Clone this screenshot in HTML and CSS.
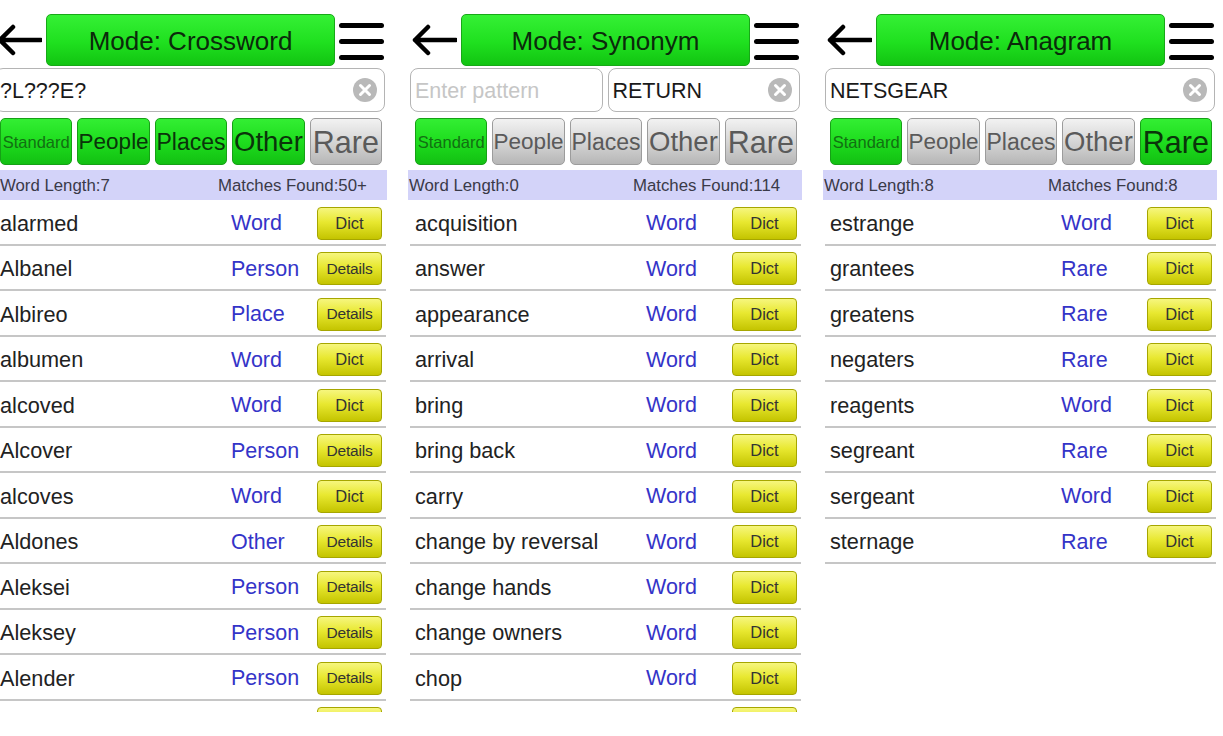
FILE: index.html
```html
<!DOCTYPE html>
<html>
<head>
<meta charset="utf-8">
<link rel="stylesheet" href="styles.css">
</head>
<body>
<div class="panels">

  <!-- Panel 1: Crossword -->
  <div class="panel first">
    <div class="header">
      <svg class="back" width="45" height="52" viewBox="0 0 45 52"><path d="M3 26 H44 M16 13 L3 26 L16 39" fill="none" stroke="#000" stroke-width="4.5" stroke-linecap="round" stroke-linejoin="round"/></svg>
      <div class="mode">Mode: Crossword</div>
      <div class="menu"><span></span><span></span><span></span></div>
    </div>
    <div class="search">
      <div class="field"><span class="val">?L???E?</span><span class="clear"><svg width="24" height="24" viewBox="0 0 24 24"><circle cx="12" cy="12" r="12" fill="#b9b9b9"/><path d="M7.5 7.5 L16.5 16.5 M16.5 7.5 L7.5 16.5" stroke="#fff" stroke-width="3" stroke-linecap="round"/></svg></span></div>
    </div>
    <div class="filters">
      <div class="fbtn on f-std">Standard</div>
      <div class="fbtn on f-ppl">People</div>
      <div class="fbtn on f-plc">Places</div>
      <div class="fbtn on f-oth">Other</div>
      <div class="fbtn f-rare">Rare</div>
    </div>
    <div class="info"><span class="len">Word Length:7</span><span class="found">Matches Found:50+</span></div>
    <div class="list">
      <div class="row"><span class="word">alarmed</span><span class="type">Word</span><span class="btn">Dict</span></div>
      <div class="row"><span class="word">Albanel</span><span class="type">Person</span><span class="btn det">Details</span></div>
      <div class="row"><span class="word">Albireo</span><span class="type">Place</span><span class="btn det">Details</span></div>
      <div class="row"><span class="word">albumen</span><span class="type">Word</span><span class="btn">Dict</span></div>
      <div class="row"><span class="word">alcoved</span><span class="type">Word</span><span class="btn">Dict</span></div>
      <div class="row"><span class="word">Alcover</span><span class="type">Person</span><span class="btn det">Details</span></div>
      <div class="row"><span class="word">alcoves</span><span class="type">Word</span><span class="btn">Dict</span></div>
      <div class="row"><span class="word">Aldones</span><span class="type">Other</span><span class="btn det">Details</span></div>
      <div class="row"><span class="word">Aleksei</span><span class="type">Person</span><span class="btn det">Details</span></div>
      <div class="row"><span class="word">Aleksey</span><span class="type">Person</span><span class="btn det">Details</span></div>
      <div class="row"><span class="word">Alender</span><span class="type">Person</span><span class="btn det">Details</span></div>
      <div class="row"><span class="word"></span><span class="type"></span><span class="btn det"></span></div>
    </div>
  </div>

  <!-- Panel 2: Synonym -->
  <div class="panel">
    <div class="header">
      <svg class="back" width="45" height="52" viewBox="0 0 45 52"><path d="M3 26 H44 M16 13 L3 26 L16 39" fill="none" stroke="#000" stroke-width="4.5" stroke-linecap="round" stroke-linejoin="round"/></svg>
      <div class="mode">Mode: Synonym</div>
      <div class="menu"><span></span><span></span><span></span></div>
    </div>
    <div class="search">
      <div class="field"><span class="val ph">Enter pattern</span></div>
      <div class="field"><span class="val">RETURN</span><span class="clear"><svg width="24" height="24" viewBox="0 0 24 24"><circle cx="12" cy="12" r="12" fill="#b9b9b9"/><path d="M7.5 7.5 L16.5 16.5 M16.5 7.5 L7.5 16.5" stroke="#fff" stroke-width="3" stroke-linecap="round"/></svg></span></div>
    </div>
    <div class="filters">
      <div class="fbtn on f-std">Standard</div>
      <div class="fbtn f-ppl">People</div>
      <div class="fbtn f-plc">Places</div>
      <div class="fbtn f-oth">Other</div>
      <div class="fbtn f-rare">Rare</div>
    </div>
    <div class="info"><span class="len">Word Length:0</span><span class="found">Matches Found:114</span></div>
    <div class="list">
      <div class="row"><span class="word">acquisition</span><span class="type">Word</span><span class="btn">Dict</span></div>
      <div class="row"><span class="word">answer</span><span class="type">Word</span><span class="btn">Dict</span></div>
      <div class="row"><span class="word">appearance</span><span class="type">Word</span><span class="btn">Dict</span></div>
      <div class="row"><span class="word">arrival</span><span class="type">Word</span><span class="btn">Dict</span></div>
      <div class="row"><span class="word">bring</span><span class="type">Word</span><span class="btn">Dict</span></div>
      <div class="row"><span class="word">bring back</span><span class="type">Word</span><span class="btn">Dict</span></div>
      <div class="row"><span class="word">carry</span><span class="type">Word</span><span class="btn">Dict</span></div>
      <div class="row"><span class="word">change by reversal</span><span class="type">Word</span><span class="btn">Dict</span></div>
      <div class="row"><span class="word">change hands</span><span class="type">Word</span><span class="btn">Dict</span></div>
      <div class="row"><span class="word">change owners</span><span class="type">Word</span><span class="btn">Dict</span></div>
      <div class="row"><span class="word">chop</span><span class="type">Word</span><span class="btn">Dict</span></div>
      <div class="row"><span class="word"></span><span class="type"></span><span class="btn"></span></div>
    </div>
  </div>

  <!-- Panel 3: Anagram -->
  <div class="panel">
    <div class="header">
      <svg class="back" width="45" height="52" viewBox="0 0 45 52"><path d="M3 26 H44 M16 13 L3 26 L16 39" fill="none" stroke="#000" stroke-width="4.5" stroke-linecap="round" stroke-linejoin="round"/></svg>
      <div class="mode">Mode: Anagram</div>
      <div class="menu"><span></span><span></span><span></span></div>
    </div>
    <div class="search">
      <div class="field"><span class="val">NETSGEAR</span><span class="clear"><svg width="24" height="24" viewBox="0 0 24 24"><circle cx="12" cy="12" r="12" fill="#b9b9b9"/><path d="M7.5 7.5 L16.5 16.5 M16.5 7.5 L7.5 16.5" stroke="#fff" stroke-width="3" stroke-linecap="round"/></svg></span></div>
    </div>
    <div class="filters">
      <div class="fbtn on f-std">Standard</div>
      <div class="fbtn f-ppl">People</div>
      <div class="fbtn f-plc">Places</div>
      <div class="fbtn f-oth">Other</div>
      <div class="fbtn on f-rare">Rare</div>
    </div>
    <div class="info"><span class="len">Word Length:8</span><span class="found">Matches Found:8</span></div>
    <div class="list">
      <div class="row"><span class="word">estrange</span><span class="type">Word</span><span class="btn">Dict</span></div>
      <div class="row"><span class="word">grantees</span><span class="type">Rare</span><span class="btn">Dict</span></div>
      <div class="row"><span class="word">greatens</span><span class="type">Rare</span><span class="btn">Dict</span></div>
      <div class="row"><span class="word">negaters</span><span class="type">Rare</span><span class="btn">Dict</span></div>
      <div class="row"><span class="word">reagents</span><span class="type">Word</span><span class="btn">Dict</span></div>
      <div class="row"><span class="word">segreant</span><span class="type">Rare</span><span class="btn">Dict</span></div>
      <div class="row"><span class="word">sergeant</span><span class="type">Word</span><span class="btn">Dict</span></div>
      <div class="row"><span class="word">sternage</span><span class="type">Rare</span><span class="btn">Dict</span></div>
    </div>
  </div>

</div>
</body>
</html>
```

FILE: styles.css
```css
* { box-sizing: border-box; }

html, body {
  margin: 0;
  padding: 0;
  background: #fff;
  width: 1223px;
  height: 736px;
  overflow: hidden;
  font-family: "Liberation Sans", Arial, sans-serif;
}

.panels {
  display: flex;
  gap: 21px;
  margin-left: -7px;
}

.panel {
  width: 394px;
  flex: none;
  padding-top: 14px;
}

/* header */
.header {
  display: flex;
  align-items: center;
  gap: 4px;
  height: 52px;
  padding-left: 4px;
}
.back { flex: none; display: block; }
.mode {
  width: 289px;
  height: 52px;
  flex: none;
  border-radius: 5px;
  border: 1px solid #17a817;
  background: linear-gradient(#35f035, #1fe01f 55%, #12c412);
  color: #0b2a0b;
  font-size: 26px;
  display: flex;
  align-items: center;
  justify-content: center;
  padding-top: 3px;
}
.menu {
  width: 45px;
  height: 52px;
  flex: none;
  display: flex;
  flex-direction: column;
  justify-content: center;
  gap: 11px;
  padding-top: 2px;
}
.menu span {
  display: block;
  height: 5px;
  border-radius: 3px;
  background: #000;
}

/* search */
.search {
  display: flex;
  gap: 5px;
  margin: 2px 2px 0 2px;
  height: 44px;
}
.field {
  flex: 1;
  display: flex;
  align-items: center;
  border: 1px solid #b4b4b4;
  border-radius: 8px;
  background: #fff;
  padding: 2px 7px 0 4px;
}
.val {
  flex: 1;
  font-size: 21.5px;
  color: #1a1a1a;
}
.val.ph { color: #c6c6c6; }
.clear { display: flex; flex: none; margin-top: -2px; }

/* filters */
.filters {
  display: flex;
  gap: 5px;
  margin-top: 6px;
  padding: 0 5px 0 7px;
  height: 47px;
}
.fbtn {
  flex: 1;
  min-width: 0;
  border-radius: 5px;
  border: 1px solid #9c9c9c;
  background: linear-gradient(#f2f2f2, #d6d6d6 50%, #b6b6b6);
  color: #5a5a5a;
  display: flex;
  align-items: center;
  justify-content: center;
  white-space: nowrap;
  overflow: visible;
  padding-top: 1px;
}
.fbtn.on {
  border-color: #16a016;
  background: linear-gradient(#33ee33, #1edd1e 50%, #12c012);
  color: #0a340a;
}
.f-std { font-size: 16.5px; }
.f-ppl { font-size: 22.5px; }
.f-plc { font-size: 23px; }
.f-oth { font-size: 27.5px; }
.f-rare { font-size: 30.5px; }
.fbtn.on.f-std { color: #127012; }

/* info bar */
.info {
  margin-top: 5px;
  height: 30px;
  background: #d3d3f9;
  display: flex;
  align-items: center;
  padding: 1px 0 0 1px;
  font-size: 16.8px;
  color: #3a3a48;
}
.info .len { width: 224px; flex: none; }
.first .info { padding-left: 7px; }
.first .info .len { width: 218px; }

/* list */
.list {
  height: 512px;
  overflow: hidden;
}
.row {
  height: 45.5px;
  margin: 0 1px 0 2px;
  padding: 4px 0 0 5px;
  border-bottom: 2px solid #c6c6c6;
  display: grid;
  grid-template-columns: 231px 86px 65px;
  align-items: center;
}
.word {
  font-size: 21.7px;
  color: #222;
  white-space: nowrap;
}
.type {
  font-size: 21.5px;
  color: #3434c8;
}
.btn {
  height: 33px;
  border-radius: 4px;
  border: 1px solid #a6a600;
  background: linear-gradient(#f6f67e, #e8e830 45%, #c4c400);
  color: #333;
  font-size: 16.5px;
  display: flex;
  align-items: center;
  justify-content: center;
  margin-top: -1px;
}
.btn.det { font-size: 15.5px; letter-spacing: -0.2px; }
```
